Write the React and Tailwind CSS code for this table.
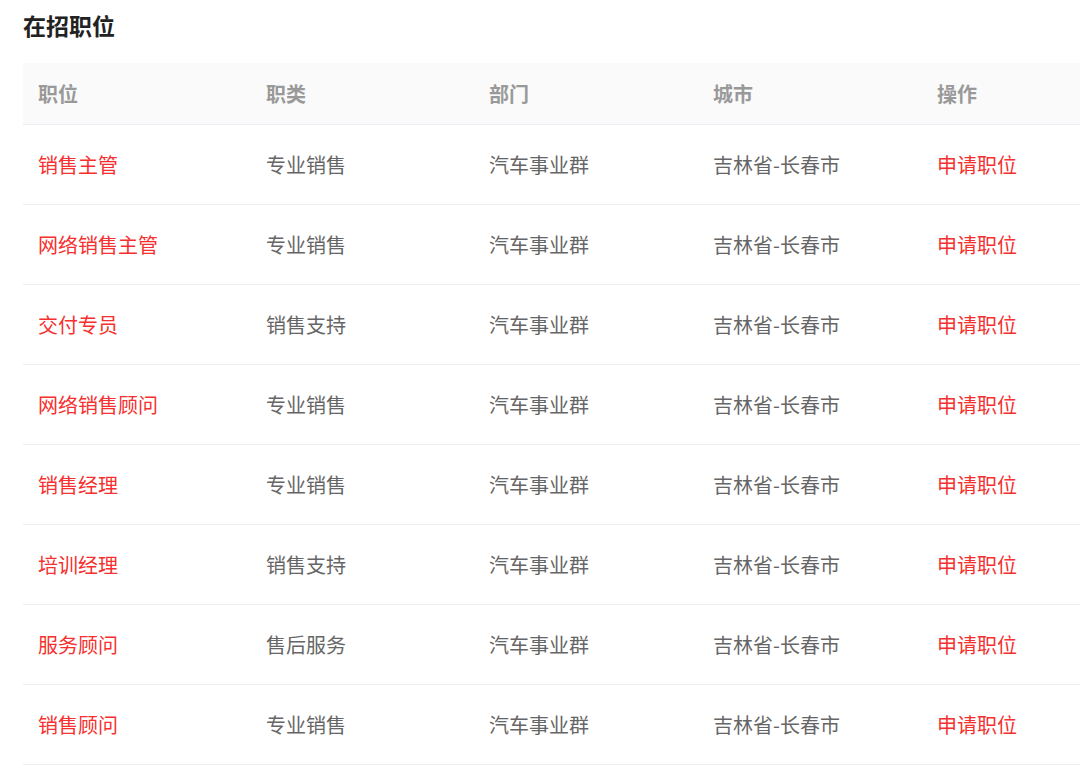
const jobs = [
  ['销售主管', '专业销售'],
  ['网络销售主管', '专业销售'],
  ['交付专员', '销售支持'],
  ['网络销售顾问', '专业销售'],
  ['销售经理', '专业销售'],
  ['培训经理', '销售支持'],
  ['服务顾问', '售后服务'],
  ['销售顾问', '专业销售'],
];

const cols = 'grid grid-cols-[228px_223px_224px_224px_224px]';

export default function App() {
  return (
    <div
      className="w-full min-h-screen overflow-hidden bg-white"
      style={{ fontFamily: '"Noto Sans CJK SC", "Noto Sans", sans-serif' }}
    >
      <div className="pl-[23px] pt-[11px]">
        <h2 className="text-[23px] leading-[28px] font-bold text-[#222] mb-[24px]">在招职位</h2>

        <div className="w-[1123px]">
          {/* Header */}
          <div className={`${cols} h-[62px] items-center bg-[#fafafa] border-b border-[#ebeef5] text-[20px] font-bold text-[#999]`}>
            <div className="pl-[15px]">职位</div>
            <div className="pl-[15px]">职类</div>
            <div className="pl-[15px]">部门</div>
            <div className="pl-[15px]">城市</div>
            <div className="pl-[15px]">操作</div>
          </div>

          {/* Rows */}
          {jobs.map(([title, type]) => (
            <div
              key={title}
              className={`${cols} h-[80px] items-center border-b border-[#eeeeee] text-[20px]`}
            >
              <div className="pl-[15px] text-[#f5302e]">{title}</div>
              <div className="pl-[15px] text-[#666]">{type}</div>
              <div className="pl-[15px] text-[#666]">汽车事业群</div>
              <div className="pl-[15px] text-[#666]">吉林省-长春市</div>
              <div className="pl-[15px] text-[#f5302e] cursor-pointer">申请职位</div>
            </div>
          ))}
        </div>
      </div>
    </div>
  );
}
